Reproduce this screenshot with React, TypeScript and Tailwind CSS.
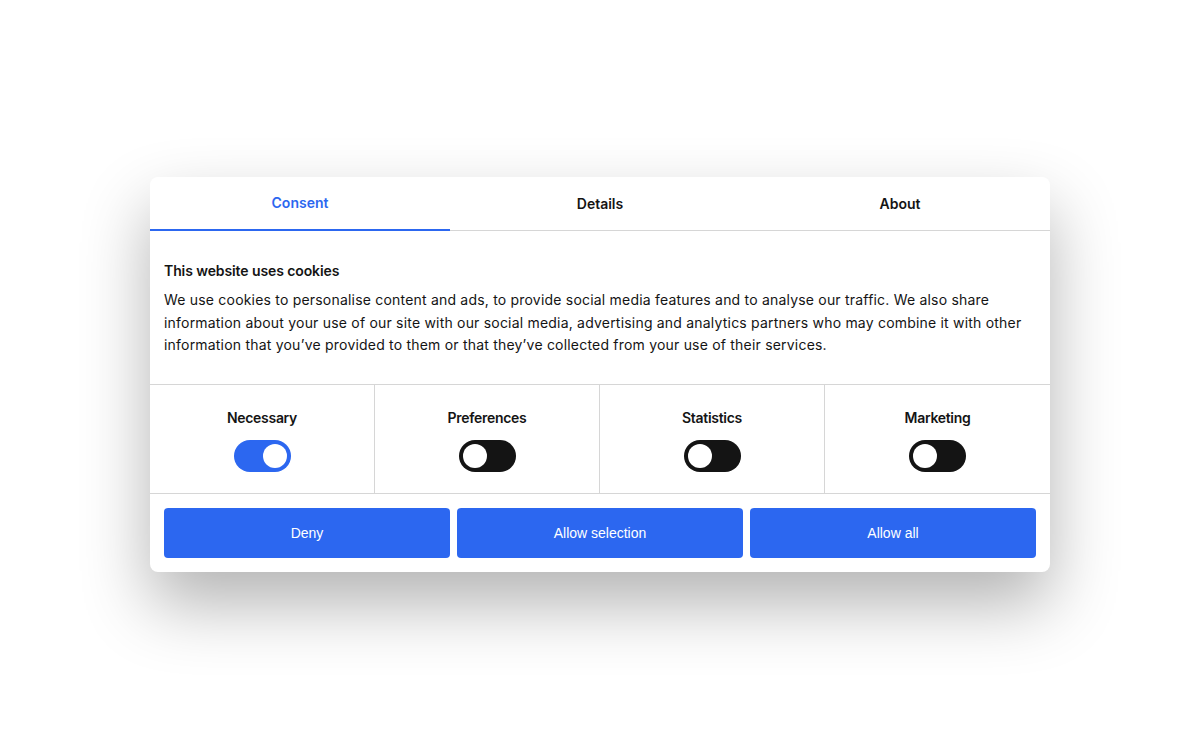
import React from 'react'

const font = { fontFamily: 'Inter, "Noto Sans", sans-serif' }

const categories = [
  { label: 'Necessary', checked: true },
  { label: 'Preferences', checked: false },
  { label: 'Statistics', checked: false },
  { label: 'Marketing', checked: false },
]

function Toggle({ checked }: { checked: boolean }) {
  return (
    <div
      className={`relative w-[57px] h-[32px] rounded-full ${
        checked ? 'bg-[#2c67f0]' : 'bg-[#141414]'
      }`}
    >
      <div
        className={`absolute top-[4px] w-[24px] h-[24px] rounded-full bg-white ${
          checked ? 'right-[4px]' : 'left-[4px]'
        }`}
      />
    </div>
  )
}

export default function App() {
  return (
    <div className="w-[1200px] h-[750px] bg-white flex justify-center pt-[177px]" style={font}>
      <div className="w-[900px] h-[395px] bg-white rounded-[8px] shadow-[0_32px_68px_rgba(0,0,0,0.3)] flex flex-col overflow-hidden text-[#141414]">
        <div className="flex border-b border-[#d6d6d6] h-[54px]">
          <div className="flex-1 flex items-center justify-center text-[14px] font-semibold text-[#2c67f0] border-b-2 border-[#2c67f0] -mb-px pb-[1px]">
            Consent
          </div>
          <div className="flex-1 flex items-center justify-center text-[14px] font-semibold pb-[1px]">
            Details
          </div>
          <div className="flex-1 flex items-center justify-center text-[14px] font-semibold pb-[1px]">
            About
          </div>
        </div>

        <div className="px-[14px] pt-[30px] pb-[27px] border-b border-[#d6d6d6]">
          <h2 className="text-[14px] leading-[20px] font-semibold tracking-[-0.1px]">This website uses cookies</h2>
          <p className="mt-[8px] text-[14px] leading-[22.5px] tracking-[0.2px]">
            We use cookies to personalise content and ads, to provide social media features and to analyse our traffic. We also share information about your use of our site with our social media, advertising and analytics partners who may combine it with other information that you’ve provided to them or that they’ve collected from your use of their services.
          </p>
        </div>

        <div className="grid grid-cols-4 border-b border-[#d6d6d6] h-[109px]">
          {categories.map((c, i) => (
            <div
              key={c.label}
              className={`flex flex-col items-center pt-[23px] ${i < 3 ? 'border-r border-[#d6d6d6]' : ''}`}
            >
              <span className="text-[14px] leading-[20px] font-semibold tracking-[-0.3px]">{c.label}</span>
              <div className="mt-[12px]">
                <Toggle checked={c.checked} />
              </div>
            </div>
          ))}
        </div>

        <div className="flex gap-[7px] p-[14px]">
          {['Deny', 'Allow selection', 'Allow all'].map((b) => (
            <button
              key={b}
              className="flex-1 h-[50px] rounded-[4px] bg-[#2c67f0] text-white text-[14px] pt-[2px]"
              style={{ fontFamily: '"Liberation Sans", Arial, sans-serif' }}
            >
              {b}
            </button>
          ))}
        </div>
      </div>
    </div>
  )
}
